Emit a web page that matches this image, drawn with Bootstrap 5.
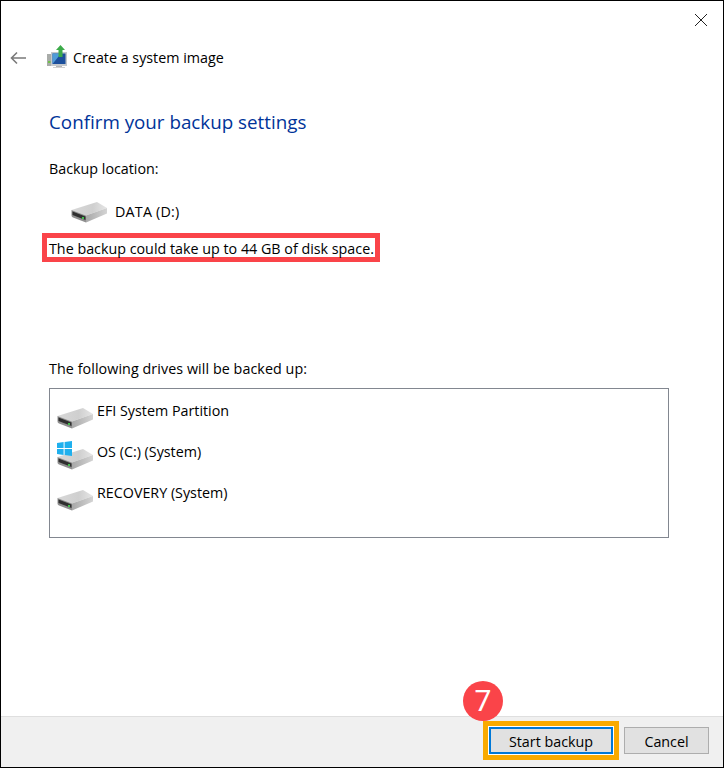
<!DOCTYPE html>
<html lang="en">
<head>
<meta charset="utf-8">
<title>Create a system image</title>
<link href="https://cdn.jsdelivr.net/npm/bootstrap@5.3.0/dist/css/bootstrap.min.css" rel="stylesheet">
<style>
html,body{height:100%;margin:0;background:#fff}
body{font-family:"Open Sans","Noto Sans","Liberation Sans",sans-serif;font-size:14.3px;color:#000;line-height:20px;overflow:hidden}
.win{width:724px;height:768px;border:1px solid #000;overflow:hidden}
.closebar{height:37px;padding:12px 15px 0 0}
.headrow{height:40px;padding-left:9px}
.backico{width:18px;height:14px;margin-right:19px}
.appico{width:20px;height:23px;margin:-3px 6px 0 0}
.maintitle{font-size:18.8px;line-height:26px;color:#003399;font-weight:400;margin:29px 0 0 48px;padding-top:2px}
.lbl{margin:0 0 0 48px}
.lbl1{margin-top:24px}
.drive1{margin:21px 0 0 70px;height:24px}
.drive1 span{margin-left:7px;letter-spacing:.2px}
.hdd{width:37px;height:24px;flex:none}
.hl{display:block;width:338px;height:29px;border:5px solid #fa4449;margin:9px 0 0 41px;padding:1px 2px 0;line-height:19px;white-space:nowrap}
.lbl2{margin-top:97px;letter-spacing:.07px}
.drivebox{margin:9px 0 0 48px;width:620px;height:150px;border:1px solid #828790;padding:13px 0 0 7px}
.drow{height:41px}
.drow span{margin-left:3px;margin-top:-1px}
.icowrap{position:relative;width:37px;height:41px;flex:none}
.icowrap .hdd{position:absolute;left:0;top:4px}
.icowrap .winlogo{position:absolute;left:0;top:-2px;width:15px;height:15px}
.spacer{flex:1}
.foot{height:51px;background:#f0f0f0;border-top:1px solid #dfdfdf;padding:4px 14px 0 0;position:relative}
.tgt{border:5px solid #f9aa00;margin-right:5px;padding:1px;background:#fff;height:39px}
.wbtn{font-family:inherit;font-size:14.3px;line-height:20px;background:#e1e1e1;color:#000;border-radius:0;padding:2px 0 0;height:27px}
.startb{width:124px;border:2px solid #0078d7}
.cancelb{width:85px;border:1px solid #adadad;margin-top:6px}
.stepn{position:absolute;left:462px;top:-36px;width:40px;height:40px;border-radius:50%;background:#fa4449;color:#fff;font-size:30px;font-weight:400;line-height:40px;text-align:center;font-family:Roboto,"Liberation Sans",sans-serif}
</style>
</head>
<body>
<div class="win d-flex flex-column">
  <div class="closebar d-flex justify-content-end">
    <svg width="14" height="14" viewBox="0 0 14 14"><path d="M1 1L13 13M13 1L1 13" stroke="#222" stroke-width="1" fill="none"/></svg>
  </div>
  <div class="headrow d-flex align-items-center">
    <svg class="backico" viewBox="0 0 18 14"><path d="M1 7H16M7 1.5L1.5 7L7 12.5" stroke="#7a7a7a" stroke-width="1.6" fill="none"/></svg>
    <svg class="appico" viewBox="0 0 20 23">
      <rect x="0" y="9" width="4.5" height="12" fill="#a9aca9"/><rect x="1" y="16" width="2.5" height="2" fill="#6fbf4a"/>
      <rect x="4" y="7" width="16" height="14" fill="#c4c8cc"/><rect x="5.5" y="8.5" width="13" height="10.5" fill="#1c4f9c"/>
      <path d="M5.5 19L14 8.5H5.5Z" fill="#4f9bd8"/><path d="M11.5 12V5H9L13.5 0L18 5H15.5V12Z" fill="#3cab4a"/>
      <rect x="9" y="21" width="6" height="1" fill="#b5b5b5"/><rect x="6" y="22" width="12" height="1" fill="#d0d0d0"/>
    </svg>
    <span>Create a system image</span>
  </div>
  <h1 class="maintitle">Confirm your backup settings</h1>
  <p class="lbl lbl1">Backup location:</p>
  <div class="drive1 d-flex align-items-center">
    <svg class="hdd" viewBox="0 0 37 24"><use href="#hddshape"/></svg>
    <span>DATA (D:)</span>
  </div>
  <div class="hl">The backup could take up to 44 GB of disk space.</div>
  <p class="lbl lbl2">The following drives will be backed up:</p>
  <div class="drivebox">
    <div class="drow d-flex"><div class="icowrap"><svg class="hdd" viewBox="0 0 37 24"><use href="#hddshape"/></svg></div><span>EFI System Partition</span></div>
    <div class="drow d-flex"><div class="icowrap"><svg class="hdd" viewBox="0 0 37 24"><use href="#hddshape"/></svg><svg class="winlogo" viewBox="0 0 15 15"><path d="M0 2L6.6 1.1V7H0ZM7.6 1L15 0V7H7.6ZM0 8H6.6V13.9L0 13ZM7.6 8H15V15L7.6 14Z" fill="#1fb0ee"/></svg></div><span>OS (C:) (System)</span></div>
    <div class="drow d-flex"><div class="icowrap"><svg class="hdd" viewBox="0 0 37 24"><use href="#hddshape"/></svg></div><span>RECOVERY (System)</span></div>
  </div>
  <div class="spacer"></div>
  <div class="foot d-flex justify-content-end align-items-start">
    <div class="stepn">7</div>
    <div class="tgt"><button type="button" class="btn wbtn startb d-block">Start backup</button></div>
    <button type="button" class="btn wbtn cancelb">Cancel</button>
  </div>
</div>
<svg width="0" height="0" class="d-block">
  <defs>
    <linearGradient id="hddtop" x1="0" y1="0" x2="1" y2="0"><stop offset="0" stop-color="#d8d8d8"/><stop offset=".6" stop-color="#cfcfcf"/><stop offset="1" stop-color="#e6e6e6"/></linearGradient>
    <linearGradient id="hddside" x1="0" y1="0" x2="1" y2="0"><stop offset="0" stop-color="#a8a8a8"/><stop offset="1" stop-color="#d4d4d4"/></linearGradient>
    <g id="hddshape">
      <path d="M0.5 10L26 2L36 8L15 15.5Z" fill="url(#hddtop)"/>
      <path d="M15 15.5L36 8V13.5L15 22.5Z" fill="url(#hddside)"/>
      <path d="M0.5 10L15 15.5V22.5L2 17.5Q0.5 17 0.5 15.5Z" fill="#8f8f8f"/>
      <path d="M1.5 11.5L14.5 16.5V20L1.5 15Z" fill="#2f2f2f"/>
      <rect x="11" y="17" width="2" height="2" fill="#43c04d"/>
    </g>
  </defs>
</svg>
<script src="https://cdn.jsdelivr.net/npm/bootstrap@5.3.0/dist/js/bootstrap.bundle.min.js"></script>
</body>
</html>
